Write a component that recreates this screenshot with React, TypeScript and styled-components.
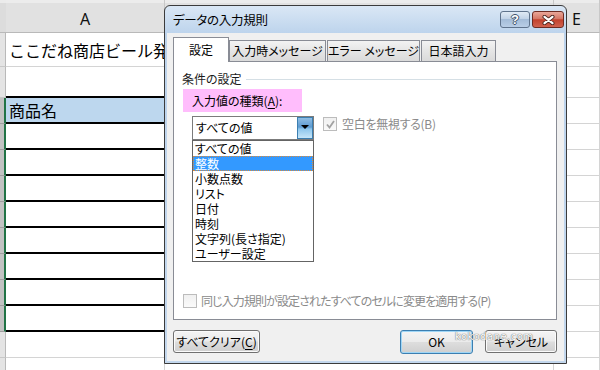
import styled, { createGlobalStyle } from 'styled-components';

const JP = `"Noto Sans CJK JP", "Noto Sans", sans-serif`;

const GlobalStyle = createGlobalStyle`
  html, body {
    margin: 0;
    padding: 0;
    background: #fff;
  }
  body {
    width: 600px;
    height: 370px;
    overflow: hidden;
    font-family: ${JP};
  }
`;

type LineKind = 'grid' | 'black';

interface SheetRow {
  id: number;
  text: string;
  line: LineKind;
  fill?: string;
  selected?: boolean;
}

const rows: SheetRow[] = [
  { id: 1, text: 'ここだね商店ビール発', line: 'grid' },
  { id: 2, text: '', line: 'black' },
  { id: 3, text: '商品名', line: 'black', fill: '#bdd7ee', selected: true },
  ...Array.from({ length: 8 }, (_, i) => ({
    id: 4 + i,
    text: '',
    line: 'black' as LineKind,
    selected: true,
  })),
  { id: 12, text: '', line: 'grid' },
  { id: 13, text: '', line: 'grid' },
];

const listItems = [
  'すべての値',
  '整数',
  '小数点数',
  'リスト',
  '日付',
  '時刻',
  '文字列(長さ指定)',
  'ユーザー設定',
];

const tabs = [
  { label: '設定', width: 56, active: true },
  { label: '入力時メッセージ', width: 97 },
  { label: 'エラー メッセージ', width: 93 },
  { label: '日本語入力', width: 75 },
];

export default function App() {
  return (
    <Page>
      <GlobalStyle />
      <Sheet>
        <Corner />
        <ColHead>A</ColHead>
        <ColHead />
        <ColHead>E</ColHead>
        {rows.map(row => (
          <SheetLine key={row.id}>
            <RowHead $selected={row.selected} />
            <Cell $line={row.line} $fill={row.fill}>
              {row.text}
            </Cell>
            <Cell $line="grid" />
            <Cell $line="grid" />
          </SheetLine>
        ))}
      </Sheet>

      <Dialog>
        <TitleBar>
          <Title>データの入力規則</Title>
          <CaptionButtons>
            <HelpButton>?</HelpButton>
            <CloseButton>
              <svg width="13" height="10" viewBox="0 0 13 10">
                <path
                  d="M2.5 1.8 L10.5 8.2 M10.5 1.8 L2.5 8.2"
                  stroke="#4a2520"
                  strokeWidth="4"
                  strokeLinecap="round"
                />
                <path
                  d="M2.5 1.8 L10.5 8.2 M10.5 1.8 L2.5 8.2"
                  stroke="#fff"
                  strokeWidth="2.2"
                  strokeLinecap="round"
                />
              </svg>
            </CloseButton>
          </CaptionButtons>
        </TitleBar>

        <Body>
          <TabRow>
            {tabs.map(tab => (
              <Tab key={tab.label} $active={tab.active} $width={tab.width}>
                {tab.label}
              </Tab>
            ))}
          </TabRow>

          <Panel>
            <GroupHeader>
              <span>条件の設定</span>
              <GroupLine />
            </GroupHeader>

            <HighlightLabel>
              入力値の種類(<u>A</u>):
            </HighlightLabel>

            <ComboRow>
              <ComboWrap>
                <Combo>
                  <ComboText>すべての値</ComboText>
                  <DropButton>
                    <svg width="8" height="4" viewBox="0 0 8 4">
                      <path d="M0 0 H8 L4 4 Z" fill="#000" />
                    </svg>
                  </DropButton>
                </Combo>
                <DropList>
                  {listItems.map((item, i) => (
                    <ListItem key={item} $selected={i === 1}>
                      {item}
                    </ListItem>
                  ))}
                </DropList>
              </ComboWrap>
              <CheckRow>
                <CheckBox>
                  <svg width="11" height="11" viewBox="0 0 11 11">
                    <path
                      d="M2 5.5 L4.5 8.5 L9 2"
                      stroke="#a2a2a2"
                      strokeWidth="1.8"
                      fill="none"
                    />
                  </svg>
                </CheckBox>
                <DisabledText $spacing={-0.3}>空白を無視する(B)</DisabledText>
              </CheckRow>
            </ComboRow>

            <BottomCheck>
              <CheckBox />
              <DisabledText $spacing={-0.9}>
                同じ入力規則が設定されたすべてのセルに変更を適用する(P)
              </DisabledText>
            </BottomCheck>
          </Panel>

          <ButtonRow>
            <PushButton $width={87}>
              すべてクリア(<u>C</u>)
            </PushButton>
            <Spacer />
            <PushButton $width={73} $default>
              OK
            </PushButton>
            <PushButton $width={72}>キャンセル</PushButton>
          </ButtonRow>
        </Body>
      </Dialog>

      <Watermark>kokodane.com</Watermark>

      <Pointer width="18" height="31" viewBox="0 0 12 20.5">
        <path
          d="M0.5 0.5 V16.5 L4.3 12.8 L6.8 19 L9 18 L6.6 12 H11.5 Z"
          fill="#fff"
          stroke="#000"
          strokeWidth="0.75"
          strokeLinejoin="miter"
        />
      </Pointer>
    </Page>
  );
}

const Page = styled.div`
  position: relative;
  width: 600px;
  height: 370px;
  overflow: hidden;
  background: #fff;
`;

const Sheet = styled.div`
  display: grid;
  grid-template-columns: 6px 159px 389px 46px;
  grid-template-rows: 33px 34px 31px repeat(11, 26px);
`;

const SheetLine = styled.div`
  display: contents;
`;

const Corner = styled.div`
  background: #dcdcdc;
  box-shadow: inset 0 3px 0 #ebebeb;
  border-bottom: 1px solid #b9b9b9;
  box-sizing: border-box;
`;

const ColHead = styled.div`
  box-sizing: border-box;
  background: #e1e1e1;
  box-shadow: inset 0 3px 0 #ececec;
  border-bottom: 1px solid #b9b9b9;
  border-right: 1px solid #c8c8c8;
  display: flex;
  align-items: center;
  justify-content: center;
  padding-top: 6px;
  font-family: 'Noto Sans', 'Liberation Sans', sans-serif;
  font-size: 16px;
  color: #111;
`;

const RowHead = styled.div<{ $selected?: boolean }>`
  box-sizing: border-box;
  background: ${p => (p.$selected ? '#c2c2c2' : '#e4e4e4')};
  border-bottom: 1px solid ${p => (p.$selected ? '#9e9e9e' : '#c8c8c8')};
  border-right: ${p => (p.$selected ? '2px solid #217346' : '1px solid #b9b9b9')};
`;

const Cell = styled.div<{ $line: LineKind; $fill?: string }>`
  box-sizing: border-box;
  border-right: 1px solid #d4d4d4;
  border-bottom: ${p => (p.$line === 'black' ? '2px solid #000' : '1px solid #d4d4d4')};
  background: ${p => p.$fill ?? '#fff'};
  display: flex;
  align-items: center;
  padding-left: 3px;
  font-size: 16px;
  line-height: 1;
  color: #000;
  white-space: nowrap;
  overflow: visible;
`;

const Dialog = styled.div`
  position: absolute;
  left: 164px;
  top: 5px;
  width: 403px;
  height: 359px;
  box-sizing: border-box;
  border: 1px solid #3b3b3b;
  border-radius: 6px 6px 0 0;
  background: linear-gradient(#dae7f5, #bcd3ec 28px, #c3d7ed);
  padding: 0 2px 2px;
  display: flex;
  flex-direction: column;
  font-family: ${JP};
  font-feature-settings: 'palt';
`;

const TitleBar = styled.div`
  height: 27px;
  display: flex;
  align-items: flex-start;
  padding-left: 6px;
`;

const Title = styled.div`
  margin-top: 6px;
  font-size: 12.5px;
  line-height: 16px;
  color: #000;
  letter-spacing: -0.3px;
`;

const CaptionButtons = styled.div`
  margin-left: auto;
  margin-top: 5px;
  display: flex;
  gap: 2px;
`;

const CaptionBase = styled.div`
  box-sizing: border-box;
  height: 17px;
  border-radius: 3px;
  display: flex;
  align-items: center;
  justify-content: center;
`;

const HelpButton = styled(CaptionBase)`
  width: 30px;
  border: 1px solid #5f738c;
  background: linear-gradient(#e0eaf5, #c1d3e7 45%, #a4bcd8 50%, #b9cee6);
  font-family: 'Liberation Sans', sans-serif;
  font-weight: bold;
  font-size: 13px;
  color: #fff;
  text-shadow: 1px 0 0 #40526a, -1px 0 0 #40526a, 0 1px 0 #40526a, 0 -1px 0 #40526a;
`;

const CloseButton = styled(CaptionBase)`
  width: 32px;
  border: 1px solid #6e2b22;
  background: linear-gradient(#e9a79a, #d57766 45%, #c2412d 52%, #d0624f);
`;

const Body = styled.div`
  flex: 1;
  background: #f0f0f0;
  padding: 5px 7px 0 6px;
  display: flex;
  flex-direction: column;
`;

const TabRow = styled.div`
  display: flex;
  align-items: flex-end;
  height: 24px;
  margin-bottom: -1px;
  position: relative;
  z-index: 1;
`;

const Tab = styled.div<{ $active?: boolean; $width: number }>`
  box-sizing: border-box;
  width: ${p => p.$width}px;
  height: ${p => (p.$active ? 25 : 22)}px;
  margin-left: ${p => (p.$active ? 0 : 1)}px;
  border: 1px solid #898c95;
  border-bottom: ${p => (p.$active ? 'none' : '1px solid #898c95')};
  background: ${p => (p.$active ? '#fff' : 'linear-gradient(#f3f3f3, #e5e5e5 50%, #dadada)')};
  display: flex;
  align-items: center;
  justify-content: center;
  font-size: 12px;
  line-height: 1;
  padding-bottom: ${p => (p.$active ? 1 : 0)}px;
  color: #000;
  white-space: nowrap;

  &:first-child + & {
    margin-left: 0;
  }
`;

const Panel = styled.div`
  box-sizing: border-box;
  height: 259px;
  background: #fff;
  border: 1px solid #898c95;
  padding: 0 5px 0 8px;
  display: flex;
  flex-direction: column;
`;

const GroupHeader = styled.div`
  margin-top: 10px;
  height: 14px;
  display: flex;
  align-items: center;
  gap: 4px;
  font-size: 12px;
  line-height: 14px;
  color: #1b1b1b;
`;

const GroupLine = styled.div`
  flex: 1;
  height: 1px;
  background: #d5dfe5;
  margin-top: 1px;
`;

const HighlightLabel = styled.div`
  margin-top: 3px;
  margin-left: 1px;
  width: 119px;
  height: 23px;
  background: #ffbdfc;
  padding-left: 9px;
  box-sizing: border-box;
  display: flex;
  align-items: center;
  font-size: 12px;
  line-height: 1;
  color: #000;

  u {
    text-underline-offset: 2px;
  }
`;

const ComboRow = styled.div`
  margin-top: 4px;
  display: flex;
  align-items: flex-start;
  gap: 9px;
`;

const ComboWrap = styled.div`
  position: relative;
  margin-left: 10px;
  width: 122px;
  height: 24px;
`;

const Combo = styled.div`
  box-sizing: border-box;
  width: 100%;
  height: 100%;
  border: 1px solid #7b7b7b;
  background: #fff;
  display: flex;
  align-items: stretch;
`;

const ComboText = styled.div`
  flex: 1;
  display: flex;
  align-items: center;
  padding-left: 3px;
  font-size: 12px;
  line-height: 1;
  color: #000;
`;

const DropButton = styled.div`
  width: 16px;
  box-sizing: border-box;
  border: 1px solid #3c7fb1;
  background: linear-gradient(#8fbde3, #5d9ad0 45%, #8ec6ec 55%, #c6e6f9);
  display: flex;
  align-items: center;
  justify-content: center;
  padding-bottom: 2px;
`;

const DropList = styled.div`
  position: absolute;
  left: 0;
  top: 24px;
  width: 122px;
  box-sizing: border-box;
  border: 1px solid #646464;
  background: #fff;
  z-index: 2;
`;

const ListItem = styled.div<{ $selected?: boolean }>`
  box-sizing: border-box;
  height: 15px;
  overflow: hidden;
  padding-left: 2px;
  font-size: 12px;
  line-height: 15px;
  white-space: nowrap;
  color: ${p => (p.$selected ? '#fff' : '#000')};
  background: ${p => (p.$selected ? '#3399ff' : 'transparent')};
  outline: ${p => (p.$selected ? '1px dotted #d98a3c' : 'none')};
  outline-offset: -1px;
`;

const CheckRow = styled.div`
  display: flex;
  align-items: center;
  gap: 5px;
  margin-top: 1px;
`;

const CheckBox = styled.div`
  box-sizing: border-box;
  width: 14px;
  height: 14px;
  border: 1px solid #bcbcbc;
  background: linear-gradient(#f0f0f0, #fafafa);
  display: flex;
  align-items: center;
  justify-content: center;
  flex-shrink: 0;
`;

const DisabledText = styled.span<{ $spacing: number }>`
  font-size: 12px;
  line-height: 14px;
  letter-spacing: ${p => p.$spacing}px;
  color: #8a8a8a;
  white-space: nowrap;
`;

const BottomCheck = styled.div`
  margin-top: auto;
  margin-bottom: 11px;
  display: flex;
  align-items: center;
  gap: 4px;
  margin-left: 1px;
`;

const ButtonRow = styled.div`
  margin-top: 10px;
  display: flex;
  align-items: flex-start;
  gap: 12px;
`;

const Spacer = styled.div`
  flex: 1;
`;

const PushButton = styled.div<{ $width: number; $default?: boolean }>`
  box-sizing: border-box;
  width: ${p => p.$width}px;
  height: ${p => (p.$default ? 24 : 23)}px;
  border: 1px solid ${p => (p.$default ? '#3c7fb1' : '#707070')};
  border-radius: 3px;
  background: linear-gradient(#f4f4f4, #ebebeb 48%, #dddddd 52%, #cfcfcf);
  box-shadow: ${p => (p.$default ? 'inset 0 0 0 1px #9fd6f6' : 'inset 0 0 0 1px #fbfbfb')};
  display: flex;
  align-items: center;
  justify-content: center;
  font-size: 12px;
  line-height: 1;
  color: #000;
  white-space: nowrap;

  u {
    text-underline-offset: 2px;
  }
`;

const Watermark = styled.div`
  position: absolute;
  left: 455px;
  top: 331px;
  font-family: 'DejaVu Sans', sans-serif;
  font-size: 10px;
  letter-spacing: 0.5px;
  color: #fff;
  text-shadow: 0 0 1px #6a6a6a, 0 0 1px #6a6a6a;
  pointer-events: none;
`;

const Pointer = styled.svg`
  position: absolute;
  left: 291px;
  top: 156px;
`;
